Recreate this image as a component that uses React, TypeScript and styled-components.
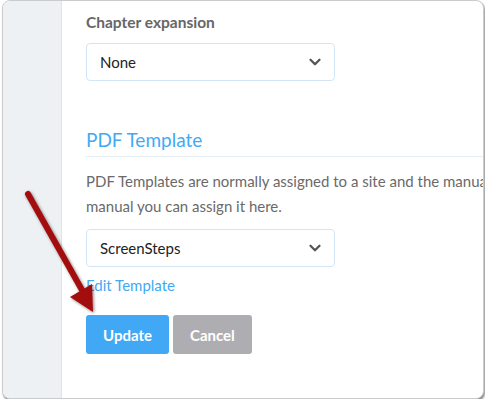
import React from "react";
import styled, { createGlobalStyle } from "styled-components";
import { ChevronDown } from "lucide-react";

const Global = createGlobalStyle`
  html, body { margin: 0; padding: 0; background: #ffffff; }
  body { font-family: "Lato", "Liberation Sans", sans-serif; }
  * { box-sizing: border-box; }
`;

const Window = styled.div`
  position: relative;
  margin-left: 2px;
  width: 482px;
  height: 399px;
  border: 1px solid #c9cbcd;
  border-radius: 8px;
  box-shadow: 1px 2px 2px rgba(0, 0, 0, 0.45);
  overflow: hidden;
  display: flex;
  background: #ffffff;
`;

const Sidebar = styled.div`
  flex: 0 0 59px;
  background: #edf1f4;
  border-right: 1px solid #dfe4e8;
`;

const Main = styled.div`
  flex: 1;
  padding: 10px 0 0 24px;
  overflow: hidden;
`;

const Label = styled.div`
  font-size: 15.5px;
  line-height: 22px;
  font-weight: 700;
  color: #666;
  margin-bottom: 10px;
`;

const Select = styled.div`
  width: 249px;
  height: 38px;
  border: 1px solid #d4e6f6;
  border-radius: 4px;
  display: flex;
  align-items: center;
  justify-content: space-between;
  padding: 0 10px 0 13px;
  font-size: 15px;
  color: #222;
`;

const Heading = styled.h2`
  margin: 45px 0 0 0;
  font-size: 19px;
  line-height: 28px;
  font-weight: 400;
  color: #42a9f5;
  padding-bottom: 2px;
  border-bottom: 1px solid #e6edf3;
  width: 420px;
`;

const Paragraph = styled.p`
  margin: 12px 0 10px 0;
  font-size: 15px;
  line-height: 25px;
  color: #6a6a6a;
  white-space: nowrap;
`;

const Link = styled.a`
  display: block;
  margin-top: 8px;
  font-size: 15px;
  line-height: 20px;
  color: #42a9f5;
  text-decoration: none;
`;

const Actions = styled.div`
  display: flex;
  gap: 4px;
  margin-top: 20px;
`;

const Button = styled.button<{ $variant: "primary" | "muted" }>`
  height: 39px;
  padding: 0 17px;
  border: none;
  border-radius: 3px;
  font-family: inherit;
  font-size: 15px;
  font-weight: 700;
  color: #fff;
  background: ${(p) => (p.$variant === "primary" ? "#41a8f6" : "#aeaeb2")};
`;

const ArrowLayer = styled.svg`
  position: absolute;
  left: 0;
  top: 0;
  pointer-events: none;
`;

export default function App() {
  return (
    <>
      <Global />
      <Window>
        <Sidebar />
        <Main>
          <Label>Chapter expansion</Label>
          <Select>
            <span>None</span>
            <ChevronDown size={18} strokeWidth={3} color="#555" />
          </Select>
          <Heading>PDF Template</Heading>
          <Paragraph>
            PDF Templates are normally assigned to a site and the manual inherits it. If you want to use a different template for this
            <br />
            manual you can assign it here.
          </Paragraph>
          <Select>
            <span>ScreenSteps</span>
            <ChevronDown size={18} strokeWidth={3} color="#555" />
          </Select>
          <Link href="#">Edit Template</Link>
          <Actions>
            <Button $variant="primary">Update</Button>
            <Button $variant="muted">Cancel</Button>
          </Actions>
        </Main>
        <ArrowLayer width="482" height="399" viewBox="0 0 482 399">
          <defs>
            <filter id="sh" x="-30%" y="-20%" width="160%" height="140%">
              <feDropShadow dx="1" dy="1" stdDeviation="1.5" floodColor="#000" floodOpacity="0.5" />
            </filter>
          </defs>
          <g filter="url(#sh)" transform="translate(-3,-1)">
            <line x1="28" y1="194" x2="82" y2="290" stroke="#a30d0d" strokeWidth="6" strokeLinecap="round" />
            <polygon points="70,297 92,284 93,312" fill="#a30d0d" />
          </g>
        </ArrowLayer>
      </Window>
    </>
  );
}
